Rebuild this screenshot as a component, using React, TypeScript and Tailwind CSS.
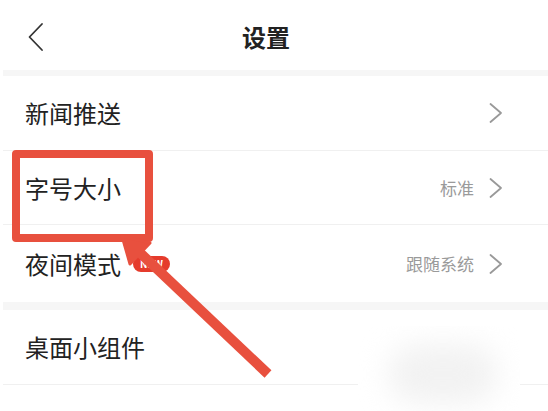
import React from 'react';

const font = { fontFamily: '"Noto Sans CJK SC", "Noto Sans", sans-serif' };

function Chevron() {
  return (
    <svg width="18" height="22" viewBox="0 0 18 22" fill="none">
      <path d="M3.5 2 L14 11 L3.5 20" stroke="#999" strokeWidth="1.8" strokeLinecap="round" strokeLinejoin="round" />
    </svg>
  );
}

type Row = { label: string; value?: string; badge?: boolean; arrow?: boolean };

function SettingRow({ label, value, badge, arrow = true, border = true, className = 'h-[75px]' }: Row & { border?: boolean; className?: string }) {
  return (
    <div className={`flex items-center pl-[22px] pr-[43px] ${className} ${border ? 'border-b border-[#f0f0f0]' : ''}`}>
      <span className="text-[24px] leading-none text-[#222]">{label}</span>
      {badge && (
        <span className="ml-[12px] flex h-[16px] items-center rounded-full bg-[#e53b2c] px-[7px] text-[10px] font-bold leading-none text-white">
          NEW
        </span>
      )}
      <div className="flex-1" />
      {value && <span className="mr-[13px] text-[17px] leading-none text-[#9a9a9a]">{value}</span>}
      {arrow && <Chevron />}
    </div>
  );
}

export default function App() {
  return (
    <div className="relative h-[411px] w-[548px] overflow-hidden bg-white" style={font}>
      {/* Header */}
      <div className="flex h-[70px] items-center pt-[4px]">
        <div className="w-[70px] pl-[26px]">
          <svg width="20" height="30" viewBox="0 0 20 30" fill="none">
            <path d="M16 2 L3.5 15 L16 28" stroke="#333" strokeWidth="1.8" strokeLinecap="round" strokeLinejoin="round" />
          </svg>
        </div>
        <div className="flex flex-1 justify-center pr-[86px]">
          <span className="text-[24px] font-bold leading-none text-[#222]">设置</span>
        </div>
      </div>

      <div className="ml-[3px]">
        <div className="h-[6px] bg-[#f6f6f6]" />
        <SettingRow label="新闻推送" />
        <SettingRow label="字号大小" value="标准" className="h-[74px]" />
        <SettingRow label="夜间模式" value="跟随系统" badge border={false} className="h-[77px]" />
        <div className="h-[8px] bg-[#f6f6f6]" />
        <SettingRow label="桌面小组件" arrow={false} />
        <SettingRow label="清理缓存" arrow={false} border={false} />
      </div>

      {/* watermark */}
      <div className="absolute left-[358px] top-[326px] h-[85px] w-[162px] overflow-hidden bg-white">
        <div className="absolute left-[30px] top-[18px] h-[60px] w-[110px] rounded-full bg-[#f2f2f2] blur-[14px]" />
      </div>

      {/* annotation box */}
      <div className="absolute left-[12px] top-[150px] h-[92px] w-[141px] rounded-[4px] border-[8px] border-[#e8503e]" />

      {/* annotation arrow */}
      <svg className="absolute left-0 top-0" width="548" height="411" viewBox="0 0 548 411">
        <line x1="268" y1="374" x2="136" y2="249" stroke="#e8503e" strokeWidth="10" />
        <polygon points="122,236 130,264 150,243" fill="#e8503e" stroke="#e8503e" strokeWidth="3" strokeLinejoin="round" />
      </svg>
    </div>
  );
}
